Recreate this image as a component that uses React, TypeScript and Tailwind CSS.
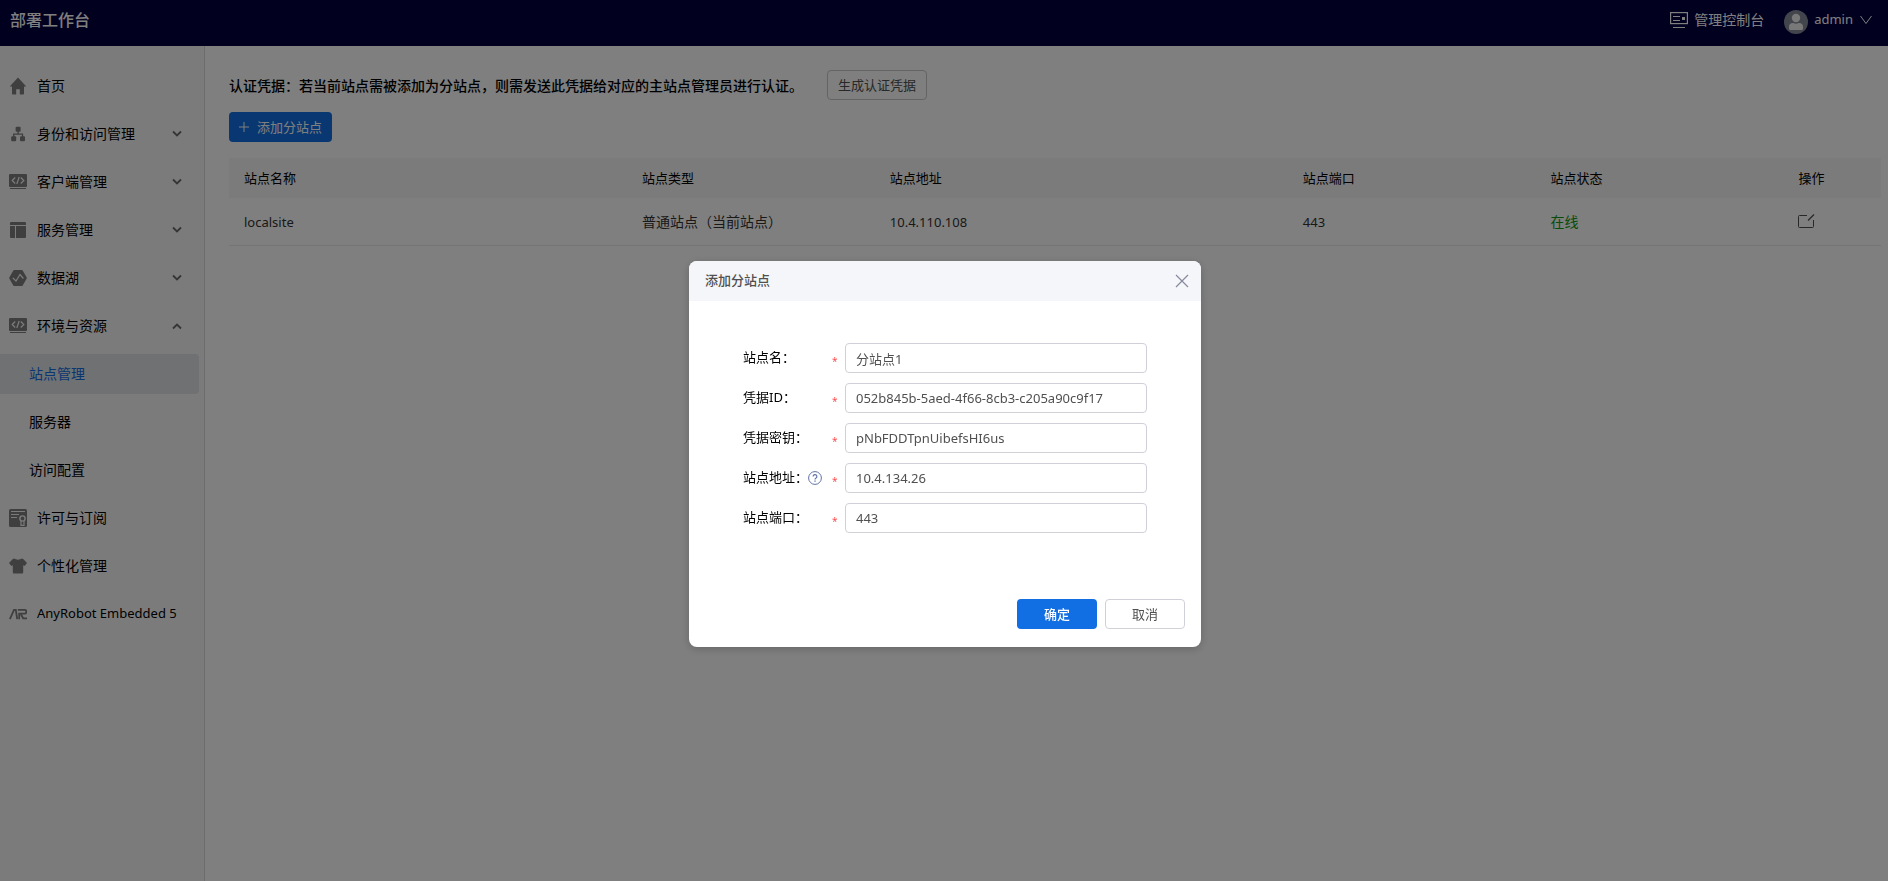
import { FC, ReactNode, SVGProps, useState } from 'react';

type IconProps = SVGProps<SVGSVGElement>;

const HomeIcon: FC<IconProps> = (props) => (
  <svg viewBox="0 0 18 18" fill="currentColor" {...props}>
    <path d="M9 .6 17.3 9.4H15v7.4a.8.8 0 0 1-.8.8h-3.4v-5.4H7.2v5.4H3.8a.8.8 0 0 1-.8-.8V9.4H.7z" />
  </svg>
);

const OrgIcon: FC<IconProps> = (props) => (
  <svg viewBox="0 0 18 18" fill="currentColor" {...props}>
    <rect x="6.6" y="1.8" width="5" height="5" rx="1" />
    <rect x="2.2" y="11.2" width="5" height="5" rx="1" />
    <rect x="11" y="11.2" width="5" height="5" rx="1" />
    <path d="M9.1 6v3M4.7 12V9.1h8.8V12" fill="none" stroke="currentColor" strokeWidth="1.3" />
  </svg>
);

const CodeIcon: FC<IconProps> = (props) => (
  <svg viewBox="0 0 18 18" fill="currentColor" {...props}>
    <rect x="0" y="1" width="18" height="13" rx="1" />
    <rect x="1" y="15" width="16" height="1" />
    <path
      d="M6.2 4.500 3.200 7.500l3 3M11.800 4.500l3 3-3 3M10.200 4l-2.400 7"
      fill="none"
      stroke="#f7f7f7"
      strokeWidth="1.2"
    />
  </svg>
);

const LayoutIcon: FC<IconProps> = (props) => (
  <svg viewBox="0 0 18 18" fill="currentColor" {...props}>
    <path d="M2 1h14a1 1 0 0 1 1 1v2H1V2a1 1 0 0 1 1-1zM1 5h5v12H2a1 1 0 0 1-1-1zM7 5h10v11a1 1 0 0 1-1 1H7z" />
    <path d="M1 4.500h16M6.500 5v12" stroke="#f7f7f7" strokeWidth=".8" />
  </svg>
);

const LakeIcon: FC<IconProps> = (props) => (
  <svg viewBox="0 0 18 18" fill="currentColor" {...props}>
    <path d="M5.2 1h7.6a1 1 0 0 1 .9.5l4 7a1 1 0 0 1 0 1l-4 7a1 1 0 0 1-.9.5H5.200a1 1 0 0 1-.9-.5l-4-7a1 1 0 0 1 0-1l4-7a1 1 0 0 1 .9-.5z" />
    <path d="m3.800 8.800 3.200 3.200 4-6.500 3.400 4" fill="none" stroke="#f7f7f7" strokeWidth="1.2" />
  </svg>
);

const LicenseIcon: FC<IconProps> = (props) => (
  <svg viewBox="0 0 18 18" fill="currentColor" {...props}>
    <rect width="18" height="18" rx="1.5" />
    <path d="M2 2.500h14M2 5.500h8M2 8.500h6" stroke="#f7f7f7" strokeWidth="1" />
    <circle cx="13.500" cy="9.500" r="2.600" fill="none" stroke="#f7f7f7" strokeWidth="1.400" />
    <path d="M12 12v4.300h3V12" fill="none" stroke="#f7f7f7" strokeWidth="1.200" />
  </svg>
);

const ShirtIcon: FC<IconProps> = (props) => (
  <svg viewBox="0 0 18 18" fill="currentColor" {...props}>
    <path d="M5.600 1.600c1 1.500 5.800 1.500 6.800 0l1.800.5 3.800 4-2.400 3-1.400-.9v7.300a1 1 0 0 1-1 1H4.800a1 1 0 0 1-1-1V8.200l-1.400.9L0 6.100l3.800-4z" />
  </svg>
);

const RobotIcon: FC<IconProps> = (props) => (
  <svg viewBox="0 0 18 18" fill="none" stroke="currentColor" strokeWidth="1.8" {...props}>
    <path d="M.9 14.200 5 4.900h1.800l1.400 9.300" />
    <path d="M8.800 4.900h7a1.400 1.400 0 0 1 1.400 1.400v1a1.400 1.400 0 0 1-1.400 1.400h-5.600v5.500M12 9.500l2.200 3.800H18" />
  </svg>
);

const ConsoleIcon: FC<IconProps> = (props) => (
  <svg viewBox="0 0 18 18" fill="none" stroke="currentColor" {...props}>
    <rect x=".6" y="1.600" width="16.800" height="11" strokeWidth="1.2" />
    <path d="M3 5.500h7M3 9.500h7M3 16.500h12" />
    <rect x="12" y="6" width="3" height="3" fill="currentColor" stroke="none" />
  </svg>
);

const AvatarIcon: FC<IconProps> = (props) => (
  <svg viewBox="0 0 24 24" {...props}>
    <circle cx="12" cy="12" r="12" fill="#878a9b" />
    <circle cx="12" cy="8" r="4.200" fill="#f0f0f2" />
    <path
      d="M5 18.500V17a4 4 0 0 1 4-4h.5c1.500 1 3.500 1 5 0h.5a4 4 0 0 1 4 4v1.500a1.500 1.500 0 0 1-1.500 1.500h-11A1.500 1.500 0 0 1 5 18.500z"
      fill="#f0f0f2"
    />
  </svg>
);

const ArrowIcon: FC<IconProps> = (props) => (
  <svg viewBox="0 0 10 10" fill="none" stroke="currentColor" strokeWidth="1.8" {...props}>
    <path d="m1 2.500 4 4 4-4" />
  </svg>
);

const EditIcon: FC<IconProps> = (props) => (
  <svg viewBox="0 0 18 16" fill="none" stroke="currentColor" strokeWidth="1" {...props}>
    <path d="M9 2.500H1.500a1 1 0 0 0-1 1v10a1 1 0 0 0 1 1h13a1 1 0 0 0 1-1V7" />
    <path d="M10 7.500 16 1.500" strokeWidth="1.3" />
  </svg>
);

const HelpIcon: FC<IconProps> = (props) => (
  <svg viewBox="0 0 14 14" fill="none" stroke="currentColor" {...props}>
    <circle cx="7" cy="7" r="6.400" />
    <path d="M5.100 5.500a1.900 1.900 0 1 1 2.700 1.700c-.6.3-.8.6-.8 1.300" strokeWidth="1.200" />
    <path d="M7 9.400v1.300" strokeWidth="1.300" />
  </svg>
);

interface NavItem {
  label: string;
  icon?: ReactNode;
  expand?: 'open' | 'closed';
  latin?: boolean;
}

const iconClass = 'h-[18px] w-[18px] shrink-0';

const navItems: NavItem[] = [
  { label: '首页', icon: <HomeIcon className={iconClass} /> },
  { label: '身份和访问管理', icon: <OrgIcon className={iconClass} />, expand: 'closed' },
  { label: '客户端管理', icon: <CodeIcon className={iconClass} />, expand: 'closed' },
  { label: '服务管理', icon: <LayoutIcon className={iconClass} />, expand: 'closed' },
  { label: '数据湖', icon: <LakeIcon className={iconClass} />, expand: 'closed' },
  { label: '环境与资源', icon: <CodeIcon className={iconClass} />, expand: 'open' },
  { label: '站点管理' },
  { label: '服务器' },
  { label: '访问配置' },
  { label: '许可与订阅', icon: <LicenseIcon className={iconClass} /> },
  { label: '个性化管理', icon: <ShirtIcon className={iconClass} /> },
  { label: 'AnyRobot Embedded 5', icon: <RobotIcon className={iconClass} />, latin: true },
];

const Header: FC = () => (
  <header className="flex h-[46px] items-start justify-between bg-[#04003e] pr-4 pl-2.5 text-white">
    <h1 className="text-base leading-10 font-medium">部署工作台</h1>
    <div className="flex h-10 items-center">
      <button type="button" className="flex items-center gap-1.5 text-sm">
        <ConsoleIcon className="h-[18px] w-[18px]" />
        管理控制台
      </button>
      <button type="button" className="ml-5 flex items-center text-[13px]">
        <AvatarIcon className="mt-1 h-6 w-6" />
        <span className="ml-1.5">admin</span>
        <svg viewBox="0 0 12 10" fill="none" stroke="currentColor" className="ml-[7px] h-2.5 w-3">
          <path d="m.5 1 5.500 7.500L11.500 1" />
        </svg>
      </button>
    </div>
  </header>
);

const Sidebar: FC = () => {
  const [active, setActive] = useState('站点管理');

  return (
    <nav className="w-[205px] shrink-0 border-r border-[#d9d9d9] bg-[#f7f7f7] pt-5 pr-[5px]">
      <ul className="flex flex-col gap-2">
        {navItems.map((item) => (
          <li key={item.label}>
            <button
              type="button"
              onClick={() => setActive(item.label)}
              className={`flex h-10 w-full items-center rounded-r-sm pr-[17px] text-left ${
                item.icon ? 'pl-[9px]' : 'pl-[29px]'
              } ${item.latin ? 'text-[13px]' : 'text-sm'} ${
                item.label === active ? 'bg-[#dee2e7] text-[#126ee3]' : 'text-black'
              }`}
            >
              {item.icon && <span className="mr-2.5 text-[#7f7f7f]">{item.icon}</span>}
              {item.label}
              {item.expand && (
                <ArrowIcon
                  className={`ml-auto h-2.5 w-2.5 text-[#6a6a6a] ${
                    item.expand === 'open' ? 'rotate-180' : ''
                  }`}
                />
              )}
            </button>
          </li>
        ))}
      </ul>
    </nav>
  );
};

const SiteTable: FC = () => (
  <table className="mt-4 w-full table-fixed border-collapse text-left">
    <thead>
      <tr className="h-10 bg-[#f7f7f7] text-[13px] text-black">
        <th className="w-[25%] pt-0.5 pl-[15px] font-normal">站点名称</th>
        <th className="w-[15%] pt-0.5 font-normal">站点类型</th>
        <th className="w-[25%] pt-0.5 font-normal">站点地址</th>
        <th className="w-[15%] pt-0.5 font-normal">站点端口</th>
        <th className="w-[15%] pt-0.5 font-normal">站点状态</th>
        <th className="w-[5%] pt-0.5 font-normal">操作</th>
      </tr>
    </thead>
    <tbody>
      <tr className="h-[47px] border-b border-[#ebebeb] text-[13px] text-[#333]">
        <td className="pt-0.5 pl-[15px]">localsite</td>
        <td className="pt-0.5 text-sm">普通站点（当前站点）</td>
        <td className="pt-0.5">10.4.110.108</td>
        <td className="pt-0.5">443</td>
        <td className="pt-0.5 text-sm text-[#0f9a0f]">在线</td>
        <td>
          <button type="button" aria-label="编辑" className="block text-[#505050]">
            <EditIcon className="h-4 w-[18px]" />
          </button>
        </td>
      </tr>
    </tbody>
  </table>
);

const fields = [
  { id: 'site-name', label: '站点名：', value: '分站点1' },
  { id: 'credential-id', label: '凭据ID：', value: '052b845b-5aed-4f66-8cb3-c205a90c9f17' },
  { id: 'credential-key', label: '凭据密钥：', value: 'pNbFDDTpnUibefsHI6us' },
  { id: 'site-address', label: '站点地址：', value: '10.4.134.26', help: true },
  { id: 'site-port', label: '站点端口：', value: '443' },
];

const AddSiteDialog: FC<{ onClose: () => void }> = ({ onClose }) => (
  <div className="fixed inset-0 flex items-center justify-center bg-black/50 pt-[27px] pl-0.5">
    <div
      role="dialog"
      aria-labelledby="dialog-title"
      className="w-[512px] overflow-hidden rounded-lg bg-white text-[13px] shadow-[0_2px_8px_rgba(0,0,0,0.2)]"
    >
      <div className="flex h-10 items-center justify-between bg-[#f5f6f9] pr-3 pl-4">
        <h2 id="dialog-title" className="font-medium text-[#505050]">
          添加分站点
        </h2>
        <button type="button" aria-label="关闭" onClick={onClose} className="text-[#868a9c]">
          <svg viewBox="0 0 14 14" fill="none" stroke="currentColor" strokeWidth="1.2" className="h-3.5 w-3.5">
            <path d="m1 1 12 12M13 1 1 13" />
          </svg>
        </button>
      </div>
      <form onSubmit={(e) => e.preventDefault()}>
        <div className="flex flex-col gap-2.5 pt-[42px] pr-[54px] pl-[54px]">
          {fields.map((field) => (
            <div key={field.id} className="flex h-[30px] items-center">
              <label htmlFor={field.id} className="w-[65px] shrink-0 text-black">
                {field.label}
              </label>
              <span className="w-6 shrink-0 text-[#6072a6]">
                {field.help && <HelpIcon className="h-3.5 w-3.5" />}
              </span>
              <span className="w-[13px] shrink-0 pt-1.5 text-[10px] text-[#ff4d4f]">*</span>
              <input
                id={field.id}
                type="text"
                defaultValue={field.value}
                className="h-[30px] min-w-0 flex-1 rounded border border-[#d0d0d9] px-2.5 text-[#505050] outline-none"
              />
            </div>
          ))}
        </div>
        <div className="flex justify-end gap-2 px-4 pt-[66px] pb-[18px]">
          <button type="submit" className="h-[30px] w-20 rounded bg-[#126ee3] pt-0.5 font-medium text-white">
            确定
          </button>
          <button
            type="button"
            onClick={onClose}
            className="h-[30px] w-20 rounded border border-[#d0d0d9] bg-white pt-0.5 text-[#505050]"
          >
            取消
          </button>
        </div>
      </form>
    </div>
  </div>
);

export default function App() {
  const [dialogOpen, setDialogOpen] = useState(true);

  return (
    <div className="flex min-h-screen flex-col bg-white font-['Noto_Sans','Noto_Sans_CJK_SC',sans-serif]">
      <Header />
      <div className="flex flex-1">
        <Sidebar />
        <main className="min-w-0 flex-1 pt-6 pr-[7px] pl-6">
          <div className="flex items-center gap-6">
            <p className="pt-0.5 text-sm font-medium text-black">
              认证凭据：若当前站点需被添加为分站点，则需发送此凭据给对应的主站点管理员进行认证。
            </p>
            <button
              type="button"
              className="h-[30px] rounded border border-[#c8c8c8] px-2.5 pt-0.5 text-[13px] text-[#505050]"
            >
              生成认证凭据
            </button>
          </div>
          <button
            type="button"
            onClick={() => setDialogOpen(true)}
            className="mt-3 flex h-[30px] items-center gap-2 rounded bg-[#126ee3] px-2.5 pt-0.5 text-[13px] text-white"
          >
            <svg viewBox="0 0 10 10" stroke="currentColor" className="mb-0.5 h-2.5 w-2.5">
              <path d="M5 0v10M0 5h10" />
            </svg>
            添加分站点
          </button>
          <SiteTable />
        </main>
      </div>
      {dialogOpen && <AddSiteDialog onClose={() => setDialogOpen(false)} />}
    </div>
  );
}
